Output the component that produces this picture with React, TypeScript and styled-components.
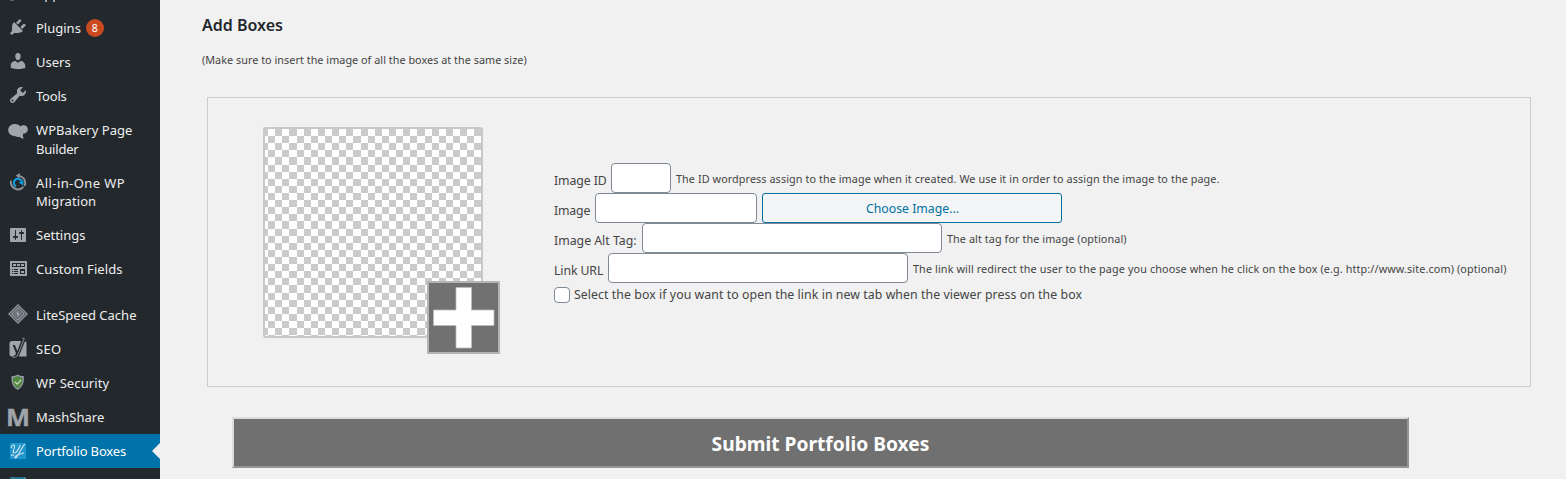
import React from 'react';
import styled, { createGlobalStyle, css } from 'styled-components';

const GlobalStyle = createGlobalStyle`
  *, *::before, *::after { box-sizing: border-box; }
  html, body { margin: 0; background: #f1f1f1; }
  body {
    overflow: hidden;
    color: #444;
    font-family: "Noto Sans", "Open Sans", sans-serif;
  }
`;

const Page = styled.div`
  display: flex;
  width: 1566px;
  height: 479px;
  overflow: hidden;
`;

/* ---------- Sidebar ---------- */

const Sidebar = styled.nav`
  flex: none;
  width: 160px;
  height: 479px;
  overflow: hidden;
  background: #23282d;
`;

const Menu = styled.ul`
  margin: -23px 0 0;
  padding: 0;
  list-style: none;
`;

const MenuItem = styled.li<{ $current?: boolean; $tall?: boolean; $gap?: boolean }>`
  position: relative;
  display: flex;
  align-items: flex-start;
  height: ${p => (p.$tall ? 52.5 : 34)}px;
  margin-top: ${p => (p.$gap ? 12 : 0)}px;
  padding-left: 8px;
  color: ${p => (p.$current ? '#fff' : '#eee')};
  background: ${p => (p.$current ? '#0073aa' : 'transparent')};
  ${p => p.$current && css`
    &::after {
      content: "";
      position: absolute;
      right: 0;
      top: 9px;
      border: 8px solid transparent;
      border-left: 0;
      border-right-color: #f1f1f1;
    }
  `}
`;

const IconBox = styled.svg`
  flex: none;
  width: 20px;
  height: 20px;
  margin: 6px 8px 0 0;
  color: #a0a5aa;
  fill: currentColor;
  overflow: visible;
`;

const MenuText = styled.span`
  padding-top: 8px;
  font-size: 13px;
  line-height: 18.5px;
  white-space: nowrap;
`;

const Line = styled.span<{ $track?: number }>`
  display: block;
  letter-spacing: ${p => p.$track ?? 0}px;
`;

const Badge = styled.span`
  width: 18px;
  height: 18px;
  margin: 8px 0 0 5px;
  border-radius: 50%;
  background: #ca4a1f;
  color: #fff;
  font-size: 10.5px;
  line-height: 19px;
  text-align: center;
`;

const Icon = ({ children }: { children: React.ReactNode }) => (
  <IconBox viewBox="0 0 20 20" aria-hidden="true">{children}</IconBox>
);

const BrushIcon = () => (
  <Icon><path d="M14.5 2.5 17 5l-7 7-3-2.500zM6 11l3 3c-1 3-4 4-7 3.500C4 16 3 12 6 11z" /></Icon>
);
const PluginIcon = () => (
  <Icon><path d="M13.11 4.36L9.87 7.6 8 5.73l3.24-3.24c.35-.34 1.05-.2 1.56.32.52.51.66 1.21.31 1.55zm-8 1.77l.91-1.12 9.01 9.01-1.19.84c-.71.71-2.63 1.16-3.82 1.16H6.14L4.9 17.26c-.59.59-1.54.59-2.12 0-.59-.58-.59-1.53 0-2.12l1.24-1.24v-3.88c0-1.13.4-3.19 1.09-3.89zm7.26 3.97l3.24-3.24c.34-.35 1.04-.21 1.55.31.52.51.66 1.21.31 1.55l-3.24 3.25z" /></Icon>
);
const UsersIcon = () => (
  <Icon><path d="M10 9.25c-2.27 0-2.73-3.44-2.73-3.44C7 4.02 7.82 2 9.97 2c2.16 0 2.98 2.02 2.71 3.81 0 0-.41 3.44-2.68 3.44zm0 2.57L12.72 10c2.39 0 4.52 2.33 4.52 4.53v2.49s-3.65 1.13-7.24 1.13c-3.65 0-7.24-1.13-7.24-1.13v-2.49c0-2.25 1.94-4.48 4.47-4.48z" /></Icon>
);
const ToolsIcon = () => (
  <Icon><path d="M16.68 9.77c-1.34 1.34-3.3 1.67-4.95.99l-5.41 6.52c-.99.99-2.59.99-3.58 0s-.99-2.59 0-3.57l6.52-5.42c-.68-1.65-.35-3.61.99-4.95 1.28-1.28 3.12-1.62 4.72-1.06l-2.89 2.89 2.82 2.82 2.86-2.87c.53 1.58.18 3.39-1.08 4.65zM3.81 16.21c.4.39 1.04.39 1.43 0 .4-.4.4-1.04 0-1.43-.39-.4-1.03-.4-1.43 0-.39.39-.39 1.03 0 1.43z" /></Icon>
);
const BakeryIcon = () => (
  <Icon><path d="M6.300 5.100C9 4.700 11.200 5.700 12.300 7.400c1.200-1.300 3.200-1.500 4.900-.9 2 .7 2.900 2.700 2.600 4.600-.4 2.500-2.500 3.700-4.900 3.700-.1 1.700.1 3.200.7 4.900-1.700-.2-3-.8-3.900-2-1.600.4-2.900.2-4.300-.4C4.100 17 1.300 15.500.5 13-.8 8.800 2.300 5.500 6.300 5.100z" /></Icon>
);
const MigrationIcon = () => (
  <Icon>
    <path d="M2.900 8.600A7.300 7.300 0 1 0 17.300 11.500 7.300 7.300 0 0 0 11 3.900" fill="none" stroke="#8d9297" strokeWidth="1.900" strokeDasharray="19 1.200 30" />
    <path d="M12 .9 7.800 3.600l3.600 3.200z" fill="#8d9297" />
    <path d="M8 14.400A4.100 4.100 0 1 1 13.900 9.600" fill="none" stroke="#0f9bdd" strokeWidth="2.100" />
    <path d="m15.500 8.500-.3 5-4.700-2.900z" fill="#0f9bdd" />
  </Icon>
);
const SettingsIcon = () => (
  <Icon><path transform="translate(0 1)" d="M18 16V4c0-.55-.45-1-1-1H3c-.55 0-1 .45-1 1v12c0 .55.45 1 1 1h14c.55 0 1-.45 1-1zM8 11h1c.55 0 1 .45 1 1s-.45 1-1 1H8v1.500c0 .28-.22.5-.5.5s-.5-.22-.5-.5V13H6c-.55 0-1-.45-1-1s.45-1 1-1h1V5.500c0-.28.22-.5.5-.5s.5.22.5.5V11zm5-2h-1c-.55 0-1-.45-1-1s.45-1 1-1h1V5.500c0-.28.22-.5.5-.5s.5.22.5.5V7h1c.55 0 1 .45 1 1s-.45 1-1 1h-1v5.500c0 .28-.22.5-.5.5s-.5-.22-.5-.5V9z" /></Icon>
);
const FieldsIcon = () => (
  <Icon>
    <rect x="2" y="3" width="17" height="15" rx=".5" />
    <g fill="#23282d">
      <path d="M4 5h13v4H4zM4 11h1.200v1H4zm0 2h1.200v1H4zm0 2h1.200v1H4zM6 11h4v1H6zm0 2h4v1H6zm0 2h4v1H6zM12 11h5v5h-5z" />
    </g>
    <path d="M5 6h3v2H5zM9 6h3v2H9zM13 6h3v2h-3zM13 13h3v2h-3z" />
  </Icon>
);
const LiteSpeedIcon = () => (
  <Icon>
    <path d="M10 0 20 10 10 20 0 10z" fill="#8b9197" />
    <path d="M10 1.900 18.100 10 10 18.100 1.900 10z" fill="#444d55" />
    <path d="M10 3 17 10 10 17 3 10z" fill="#9298a0" />
    <path d="M10 5 15 10 10 15 5 10z" fill="#727a82" stroke="#50585f" strokeWidth=".8" />
    <path d="M11.500 5.500 7.500 10l2 .5-1.500 4 4.500-4.800-2-.4z" fill="#b4b8bc" stroke="#454d54" strokeWidth=".5" />
  </Icon>
);
const SeoIcon = () => (
  <Icon>
    <path d="M4 3h11.500L9 18.500H4A2.500 2.500 0 0 1 1.500 16V5.500A2.500 2.500 0 0 1 4 3zM17 3.300c1 .3 1.500 1.200 1.500 2.200v13h-7.700z" />
    <path d="M4.700 6.900h2.200l2.400 6L14 .8h2.200L10 15.700c-.9 2.200-2.100 3.700-4.700 3.800v-1.700c1.700-.2 2.600-1.300 2.600-2.800z" fill="#23282d" />
    <path d="M14.100.3h2.200L10.200 15.900c-.9 2.200-2.400 3.600-4.900 3.700v-1.800" fill="none" stroke="#a0a5aa" strokeWidth=".7" />
  </Icon>
);
const ShieldIcon = () => (
  <Icon>
    <path d="M9.700 2.500c1.700 1.100 3.700 1.600 6 1.600.8 6.400-1 11.200-6 13.900-5-2.700-6.900-7.500-6-13.900 2.200 0 4.300-.5 6-1.600z" fill="#9699ac" />
    <path d="M9.700 4c1.500.9 3.100 1.300 4.800 1.400.4 5.200-1 8.800-4.800 11.100-3.800-2.300-5.300-5.900-4.800-11.100 1.700-.1 3.300-.5 4.800-1.400z" fill="#558840" />
    <path d="m6.800 9.700 2.300 2.400 4.100-4.300" fill="none" stroke="#d5e0cf" strokeWidth="1.100" />
  </Icon>
);

const LogoLetter = styled.text`
  font-family: "Open Sans", sans-serif;
  font-weight: 700;
  font-size: 24px;
`;

const MashIcon = () => (
  <Icon><LogoLetter x="-2" y="20" textLength="24" lengthAdjust="spacingAndGlyphs" stroke="#a0a5aa" strokeWidth=".4">M</LogoLetter></Icon>
);
const PortfolioIcon = ({ dim }: { dim?: boolean }) => {
  const ink = dim ? '#8fa9b5' : '#cfe1ea';
  return (
    <Icon>
      <rect x="2" y="3" width="16" height="16" fill={dim ? '#24708f' : '#1f96cc'} />
      <path
        d="M3 8C4 4.500 7 4 6.500 7 6 10 4 12.500 6 13c2.500 0 5-4.500 6.200-8M16.800 4.200C14 7 11 14 8.500 17.300c-1 1.200-2.500.2-1-1C10 14.500 13 14 16 12.800M3 15.500c1-.8 2-.8 3-.2"
        fill="none"
        stroke={ink}
        strokeWidth="1.100"
      />
    </Icon>
  );
};

type Entry = {
  icon: React.ReactNode;
  lines: [string, number][];
  badge?: string;
  current?: boolean;
  gap?: boolean;
};

const entries: Entry[] = [
  { icon: <BrushIcon />, lines: [['Appearance', 0]] },
  { icon: <PluginIcon />, lines: [['Plugins', 0]], badge: '8' },
  { icon: <UsersIcon />, lines: [['Users', 0]] },
  { icon: <ToolsIcon />, lines: [['Tools', -0.2]] },
  { icon: <BakeryIcon />, lines: [['WPBakery Page', 0.05], ['Builder', -0.2]] },
  { icon: <MigrationIcon />, lines: [['All-in-One WP', 0.42], ['Migration', 0.08]] },
  { icon: <SettingsIcon />, lines: [['Settings', 0]] },
  { icon: <FieldsIcon />, lines: [['Custom Fields', 0.07]] },
  { icon: <LiteSpeedIcon />, lines: [['LiteSpeed Cache', 0]], gap: true },
  { icon: <SeoIcon />, lines: [['SEO', 0.3]] },
  { icon: <ShieldIcon />, lines: [['WP Security', 0.1]] },
  { icon: <MashIcon />, lines: [['MashShare', 0]] },
  { icon: <PortfolioIcon />, lines: [['Portfolio Boxes', -0.15]], current: true },
  { icon: <PortfolioIcon dim />, lines: [] },
];

/* ---------- Main content ---------- */

const Main = styled.main`
  flex: 1;
  padding: 15px 35px 0 42px;
`;

const Title = styled.h3`
  margin: 0;
  height: 20px;
  color: #23282d;
  font-size: 16px;
  font-weight: 600;
  line-height: 20px;
`;

const Help = styled.span<{ $track?: number }>`
  font-size: 10.8px;
  letter-spacing: ${p => p.$track ?? 0.09}px;
  white-space: nowrap;
`;

const Note = styled(Help)`
  display: block;
  margin-top: 15px;
  line-height: 20px;
`;

const Panel = styled.section`
  display: flex;
  width: 1324px;
  height: 290px;
  margin: 27px 0 0 5px;
  padding: 29px 0 0 55px;
  border: 1px solid #ccc;
`;

const Preview = styled.div`
  position: relative;
  flex: none;
  width: 220px;
  height: 211px;
  border: 2px solid #c8c8c8;
  border-radius: 3px;
  background: #fff;
`;

const Checker = styled.svg`
  display: block;
  width: 216px;
  height: 207px;
  fill: #cbcbcb;
`;

const CELL = 7.11;
const checkerPath = Array.from({ length: 30 }, (_, row) =>
  Array.from({ length: 16 }, (_, col) => {
    const x = (2 * col + (row % 2)) * CELL - 4;
    return `M${x.toFixed(2)} ${(row * CELL).toFixed(2)}h${CELL}v${CELL}h-${CELL}z`;
  }).join(''),
).join('');

const AddButton = styled.button`
  position: absolute;
  left: 162px;
  top: 152px;
  width: 73px;
  height: 73px;
  padding: 0;
  border: 2px solid #b4b4b4;
  border-radius: 1px;
  background: #717171;
  svg { display: block; }
`;

const Form = styled.form`
  display: flex;
  flex-direction: column;
  margin: 36px 0 0 71px;
`;

const Row = styled.div`
  display: flex;
  align-items: center;
  height: 30px;
`;

const Label = styled.label<{ $w: number; $track?: number }>`
  width: ${p => p.$w}px;
  padding-top: 6px;
  font-size: 12.3px;
  line-height: 20px;
  letter-spacing: ${p => p.$track ?? 0}px;
  white-space: nowrap;
`;

const Input = styled.input<{ $w: number }>`
  width: ${p => p.$w}px;
  height: 30px;
  margin: 0 5px 0 0;
  padding: 0 8px;
  border: 1px solid #7e8993;
  border-radius: 4px;
  background: #fff;
`;

const ChooseButton = styled.button`
  width: 300px;
  height: 30px;
  padding: 2px 0 0 1px;
  border: 1px solid #0071a1;
  border-radius: 3px;
  background: #f3f5f6;
  color: #0071a1;
  font-family: inherit;
  font-size: 12.3px;
  line-height: 26px;
`;

const CheckRow = styled.label`
  display: flex;
  align-items: center;
  height: 24px;
`;

const CheckText = styled.span`
  padding-bottom: 1px;
  font-size: 12.3px;
  line-height: 20px;
  letter-spacing: 0.07px;
`;

const Checkbox = styled.input`
  appearance: none;
  width: 16px;
  height: 16px;
  margin: 0 4px 0 0;
  border: 1px solid #7e8993;
  border-radius: 4px;
  background: #fff;
`;

const Submit = styled.button`
  display: block;
  width: 1177px;
  height: 51px;
  margin: 30px 0 0 30px;
  padding: 2px 0 0;
  border: 2px solid;
  border-color: #ddd #959595 #959595 #ddd;
  background: #707070;
  color: #fff;
  font-family: inherit;
  font-size: 19.2px;
  font-weight: 700;
  line-height: 45px;
`;

export default function App() {
  return (
    <Page>
      <GlobalStyle />
      <Sidebar>
        <Menu>
          {entries.map((e, i) => (
            <MenuItem key={i} $current={e.current} $gap={e.gap} $tall={e.lines.length > 1}>
              {e.icon}
              <MenuText>
                {e.lines.map(([text, track]) => <Line key={text} $track={track}>{text}</Line>)}
              </MenuText>
              {e.badge && <Badge>{e.badge}</Badge>}
            </MenuItem>
          ))}
        </Menu>
      </Sidebar>
      <Main>
        <Title>Add Boxes</Title>
        <Note $track={0.04}>(Make sure to insert the image of all the boxes at the same size)</Note>
        <Panel>
          <Preview>
            <Checker viewBox="0 0 216 207" shapeRendering="crispEdges" aria-hidden="true">
              <path d={checkerPath} />
            </Checker>
            <AddButton type="button" aria-label="Add image">
              <svg width="69" height="69" viewBox="0 0 69 69">
                <path d="M27 4.500h15.500V27H65v15.500H42.500V65H27V42.500H4.500V27H27z" fill="#fff" stroke="#bbb" strokeWidth=".8" />
              </svg>
            </AddButton>
          </Preview>
          <Form>
            <Row>
              <Label $w={57} $track={-0.1}>Image ID</Label>
              <Input $w={60} />
              <Help>The ID wordpress assign to the image when it created. We use it in order to assign the image to the page.</Help>
            </Row>
            <Row>
              <Label $w={41} $track={-0.15}>Image</Label>
              <Input $w={162} />
              <ChooseButton type="button">Choose Image...</ChooseButton>
            </Row>
            <Row>
              <Label $w={88}>Image Alt Tag:</Label>
              <Input $w={300} />
              <Help>The alt tag for the image (optional)</Help>
            </Row>
            <Row>
              <Label $w={54} $track={-0.1}>Link URL</Label>
              <Input $w={300} />
              <Help $track={0.12}>The link will redirect the user to the page you choose when he click on the box (e.g. http://www.site.com) (optional)</Help>
            </Row>
            <CheckRow>
              <Checkbox type="checkbox" />
              <CheckText>Select the box if you want to open the link in new tab when the viewer press on the box</CheckText>
            </CheckRow>
          </Form>
        </Panel>
        <Submit type="submit">Submit Portfolio Boxes</Submit>
      </Main>
    </Page>
  );
}
